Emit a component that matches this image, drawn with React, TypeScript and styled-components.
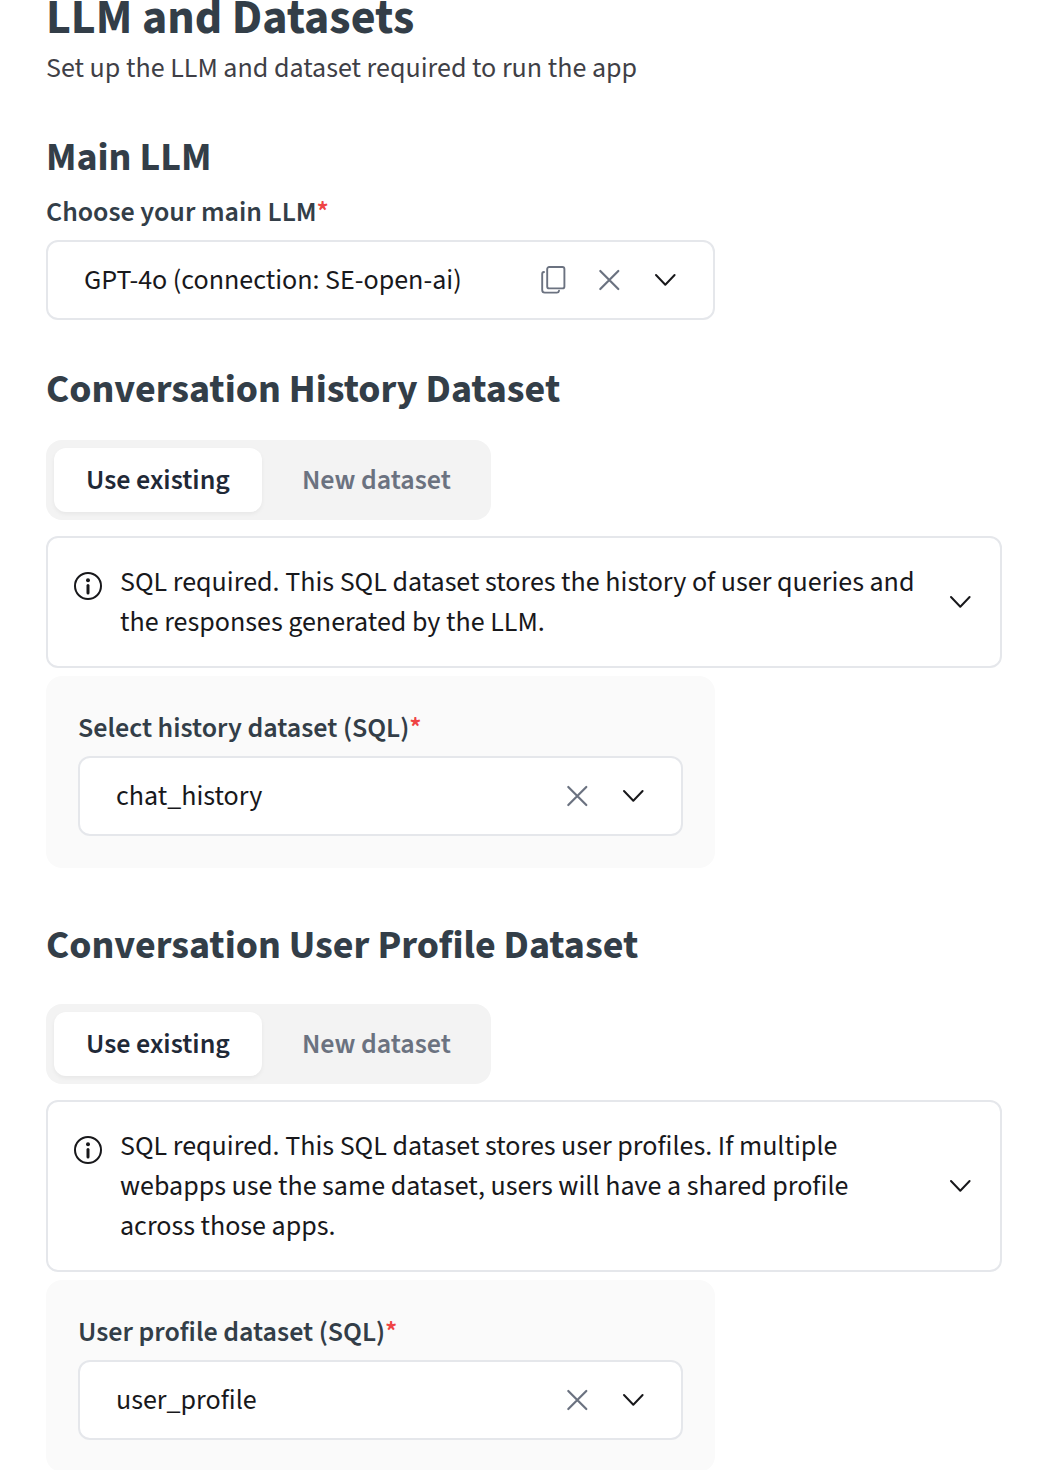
import React, { useState } from "react";
import styled, { createGlobalStyle } from "styled-components";

const GlobalStyle = createGlobalStyle`
  *, *::before, *::after { box-sizing: border-box; }
  body {
    margin: 0;
    background: #ffffff;
    color: #18181b;
    font-family: "Source Sans 3", "Source Sans Pro", "Noto Sans CJK SC", sans-serif;
    font-size: 28px;
    line-height: 40px;
  }
  button, select { font: inherit; }
`;

const Page = styled.main`
  padding: 0 40px 0 46px;
`;

const Header = styled.header`
  margin-bottom: 40px;
`;

const PageTitle = styled.h1`
  margin: 0 0 12px;
  font-size: 48px;
  line-height: 36px;
  font-weight: 700;
  color: #333e48;
`;

const Subtitle = styled.p`
  margin: 0;
  color: #3f3f46;
`;

const Section = styled.section`
  margin-bottom: 40px;
`;

const SectionTitle = styled.h2<{ $gap: number }>`
  margin: 0 0 ${(p) => p.$gap}px;
  font-size: 40px;
  line-height: 60px;
  font-weight: 700;
  color: #333e48;
`;

const Label = styled.label`
  display: block;
  margin-bottom: 8px;
  font-weight: 600;
  color: #333e48;
`;

const Required = styled.span`
  color: #ef4444;
`;

const Field = styled.div`
  max-width: 669px;
`;

const SelectBox = styled.div`
  display: flex;
  align-items: center;
  height: 80px;
  padding: 0 34px 0 36px;
  border: 2px solid #e5e7eb;
  border-radius: 12px;
  background: #ffffff;
`;

const Select = styled.select`
  flex: 1;
  min-width: 0;
  padding: 0;
  border: 0;
  appearance: none;
  background: transparent;
  color: #18181b;
`;

const Actions = styled.div`
  display: flex;
  gap: 28px;
`;

const IconButton = styled.button`
  display: flex;
  padding: 0;
  border: 0;
  background: transparent;
  color: #6b7280;
`;

const Tabs = styled.div`
  display: inline-flex;
  gap: 8px;
  padding: 8px;
  border-radius: 16px;
  background: #f3f3f3;
  vertical-align: top;
`;

const Tab = styled.button<{ $active: boolean }>`
  height: 64px;
  padding: 0 32px;
  border: 0;
  border-radius: 12px;
  font-weight: 600;
  color: ${(p) => (p.$active ? "#1f2937" : "#6b7280")};
  background: ${(p) => (p.$active ? "#ffffff" : "transparent")};
  box-shadow: ${(p) => (p.$active ? "0 2px 4px rgba(0, 0, 0, 0.05)" : "none")};
`;

const Notice = styled.div`
  display: flex;
  align-items: flex-start;
  gap: 16px;
  margin: 16px 0 8px;
  padding: 24px 26px 24px 24px;
  border: 2px solid #e5e7eb;
  border-radius: 12px;
`;

const NoticeIcon = styled.span`
  display: flex;
  padding-top: 8px;
`;

const NoticeText = styled.p`
  flex: 1;
  margin: 0;
`;

const NoticeToggle = styled(IconButton)`
  align-self: center;
  margin-left: 8px;
`;

const DatasetBlock = styled(Section)`
  margin-bottom: 48px;

  &:last-child {
    margin-bottom: 0;
  }
`;

const Panel = styled.div`
  max-width: 669px;
  padding: 32px;
  border-radius: 16px;
  background: #fafafa;
`;

const Chevron = () => (
  <svg width="28" height="28" viewBox="0 0 28 28" fill="none" stroke="#18181b" strokeWidth="2" strokeLinecap="round" strokeLinejoin="round" aria-hidden="true">
    <path d="M5 9l9.3 9.7L23.6 9" />
  </svg>
);

const Cross = () => (
  <svg width="28" height="28" viewBox="0 0 28 28" fill="none" stroke="currentColor" strokeWidth="2.2" strokeLinecap="round" aria-hidden="true">
    <path d="M5.3 5l18 18M23.3 5l-18 18" />
  </svg>
);

const Copy = () => (
  <svg width="28" height="28" viewBox="0 0 28 28" fill="none" stroke="currentColor" strokeWidth="1.9" strokeLinecap="round" strokeLinejoin="round" aria-hidden="true">
    <rect x="8.2" y="1" width="17.2" height="21.4" rx="2" />
    <path d="M5 6a2 2 0 0 0-1.8 2v16a2.6 2.6 0 0 0 2.6 2.6h12a2.2 2.2 0 0 0 2.2-1.8" />
  </svg>
);

const Info = () => (
  <svg width="32" height="32" viewBox="0 0 32 32" fill="none" stroke="#18181b" strokeWidth="2" strokeLinecap="round" aria-hidden="true">
    <circle cx="16" cy="16" r="13" />
    <path d="M16 15.5v7.5" strokeWidth="3" />
    <circle cx="16" cy="10.3" r="2" fill="#18181b" stroke="none" />
  </svg>
);

type PickerProps = { id: string; label: string; value: string; copyable?: boolean };

function Picker({ id, label, value, copyable }: PickerProps) {
  return (
    <>
      <Label htmlFor={id}>{label}<Required>*</Required></Label>
      <SelectBox>
        <Select id={id} defaultValue={value}>
          <option>{value}</option>
        </Select>
        <Actions>
          {copyable && <IconButton type="button" aria-label="Copy"><Copy /></IconButton>}
          <IconButton type="button" aria-label="Clear"><Cross /></IconButton>
          <IconButton type="button" aria-label="Open"><Chevron /></IconButton>
        </Actions>
      </SelectBox>
    </>
  );
}

type DatasetProps = { title: string; gap: number; note: string; id: string; label: string; value: string };

function DatasetSection({ title, gap, note, id, label, value }: DatasetProps) {
  const [tab, setTab] = useState("Use existing");
  return (
    <DatasetBlock>
      <SectionTitle $gap={gap}>{title}</SectionTitle>
      <Tabs>
        {["Use existing", "New dataset"].map((name) => (
          <Tab key={name} type="button" $active={tab === name} onClick={() => setTab(name)}>{name}</Tab>
        ))}
      </Tabs>
      <Notice>
        <NoticeIcon><Info /></NoticeIcon>
        <NoticeText>{note}</NoticeText>
        <NoticeToggle type="button" aria-label="Show details"><Chevron /></NoticeToggle>
      </Notice>
      <Panel><Picker id={id} label={label} value={value} /></Panel>
    </DatasetBlock>
  );
}

export default function App() {
  return (
    <Page>
      <GlobalStyle />
      <Header>
        <PageTitle>LLM and Datasets</PageTitle>
        <Subtitle>Set up the LLM and dataset required to run the app</Subtitle>
      </Header>
      <Section>
        <SectionTitle $gap={4}>Main LLM</SectionTitle>
        <Field><Picker id="main-llm" label="Choose your main LLM" value="GPT-4o (connection: SE-open-ai)" copyable /></Field>
      </Section>
      <DatasetSection
        title="Conversation History Dataset"
        gap={20}
        note="SQL required. This SQL dataset stores the history of user queries and the responses generated by the LLM."
        id="history"
        label="Select history dataset (SQL)"
        value="chat_history"
      />
      <DatasetSection
        title="Conversation User Profile Dataset"
        gap={28}
        note="SQL required. This SQL dataset stores user profiles. If multiple webapps use the same dataset, users will have a shared profile across those apps."
        id="profile"
        label="User profile dataset (SQL)"
        value="user_profile"
      />
    </Page>
  );
}
